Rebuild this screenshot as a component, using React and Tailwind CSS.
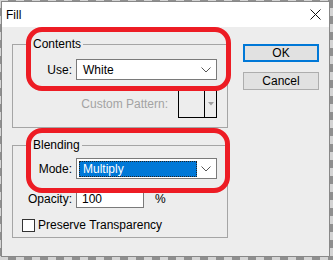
function Chevron() {
  return (
    <svg width="10" height="6" viewBox="0 0 10 6" className="shrink-0">
      <path d="M0.5 0.5 L5 5 L9.5 0.5" fill="none" stroke="#555" strokeWidth="1" />
    </svg>
  );
}

export default function App() {
  return (
    <div className="w-[333px] h-[260px] bg-[conic-gradient(#8f8f8f_25%,#d4d4d4_0_50%,#8f8f8f_0_75%,#d4d4d4_0)] bg-size-[16px_16px] pt-[1px] pl-[1px] font-['Liberation_Sans',Arial,sans-serif] text-[12px] text-black">
      <div className="relative w-[329px] h-[256px] border border-[#888] bg-[#ededed] flex flex-col">
        <div className="h-[25px] shrink-0 bg-white flex items-center justify-between pl-[4px] pr-[8px]">
          <span>Fill</span>
          <svg width="11" height="11" viewBox="0 0 11 11">
            <path d="M0.5 0.5 L10.5 10.5 M10.5 0.5 L0.5 10.5" stroke="#111" strokeWidth="1" fill="none" />
          </svg>
        </div>
        <div className="flex pl-[10px] gap-[15px]">
          <div className="flex flex-col w-[216px] shrink-0">
            <fieldset className="mt-[10px] h-[91px] border border-[#a5a5a5]">
              <legend className="ml-[18px] px-[2px] leading-[14px]">Contents</legend>
              <div className="flex items-center mt-[8px]">
                <span className="w-[59px] text-right">Use:</span>
                <div className="ml-[4px] w-[141px] h-[21px] bg-white border border-[#7a7a7a] flex items-center justify-between pl-[6px] pr-[5px]">
                  <span>White</span>
                  <Chevron />
                </div>
              </div>
              <div className="flex items-center justify-end mt-[10px] pr-[10px] gap-[10px]">
                <span className="text-[#a3a3a3]">Custom Pattern:</span>
                <div className="w-[39px] h-[28px] border border-black flex">
                  <div className="w-[26px] h-full border-r border-black"></div>
                  <div className="flex-1 flex items-center justify-center">
                    <svg width="6" height="4" viewBox="0 0 6 4">
                      <path d="M0 0 L6 0 L3 3.5 Z" fill="#a0a0a0" />
                    </svg>
                  </div>
                </div>
              </div>
            </fieldset>
            <fieldset className="mt-[10px] h-[100px] border border-[#a5a5a5]">
              <legend className="ml-[18px] px-[2px] leading-[14px]">Blending</legend>
              <div className="flex items-center mt-[6px]">
                <span className="w-[59px] text-right">Mode:</span>
                <div className="ml-[4px] w-[141px] h-[21px] bg-white border border-[#7a7a7a] flex items-center justify-between pl-[2px] pr-[5px]">
                  <div className="w-[118px] h-[16px] bg-[#0078d7] border border-dotted border-[#222] flex items-center pl-[3px] text-white">
                    Multiply
                  </div>
                  <Chevron />
                </div>
              </div>
              <div className="flex items-center mt-[10px]">
                <span className="w-[59px] text-right">Opacity:</span>
                <div className="ml-[4px] w-[68px] h-[19px] bg-white border border-[#7a7a7a] flex items-center pl-[5px]">100</div>
                <span className="ml-[11px]">%</span>
              </div>
              <div className="flex items-center mt-[8px] pl-[9px]">
                <div className="w-[13px] h-[13px] border border-[#333] bg-white"></div>
                <span className="ml-[3px]">Preserve Transparency</span>
              </div>
            </fieldset>
          </div>
          <div className="flex flex-col mt-[17px] gap-[10px]">
            <div className="w-[76px] h-[18px] border-2 border-[#0078d7] bg-[#e1e1e1] flex items-center justify-center">OK</div>
            <div className="w-[76px] h-[18px] border border-[#adadad] bg-[#e1e1e1] flex items-center justify-center">Cancel</div>
          </div>
        </div>
        <div className="absolute left-[24px] top-[25px] w-[205px] h-[64px] border-[5px] border-[#ed1c24] rounded-[16px]"></div>
        <div className="absolute left-[24px] top-[126px] w-[204px] h-[65px] border-[5px] border-[#ed1c24] rounded-[16px]"></div>
      </div>
    </div>
  );
}
